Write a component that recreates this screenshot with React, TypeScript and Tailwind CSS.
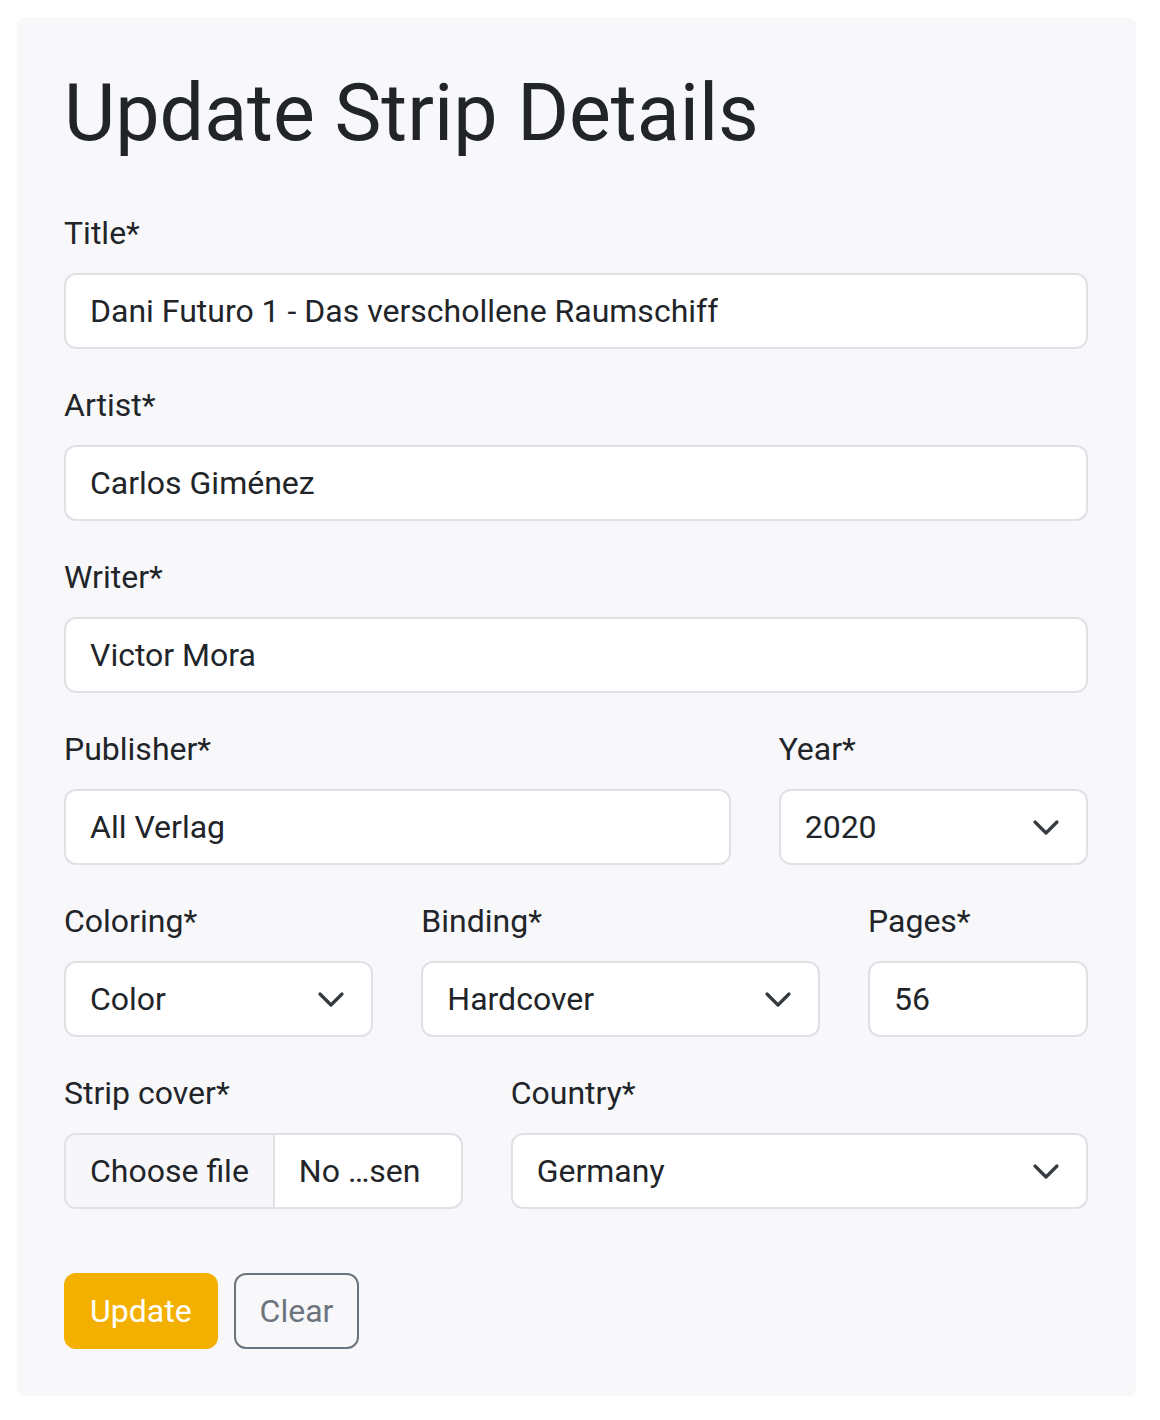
import React from "react";

const font = { fontFamily: "Roboto, 'Liberation Sans', sans-serif" };

function Chevron() {
  return (
    <svg width="32" height="32" viewBox="0 0 16 16" className="shrink-0">
      <path d="m2.5 5.5 5.5 5.5 5.5-5.5" fill="none" stroke="#343a40" strokeWidth="1.6" strokeLinecap="round" strokeLinejoin="round" />
    </svg>
  );
}

function Label({ children }: { children: React.ReactNode }) {
  return <div className="mb-4 text-[32px] leading-[48px] text-[#212529]">{children}</div>;
}

function Input({ value }: { value: string }) {
  return (
    <div className="flex h-[76px] items-center rounded-xl border-2 border-[#dee2e6] bg-white px-6 text-[32px] text-[#212529]">
      <span className="truncate">{value}</span>
    </div>
  );
}

function Select({ value }: { value: string }) {
  return (
    <div className="flex h-[76px] items-center justify-between rounded-xl border-2 border-[#dee2e6] bg-white pl-6 pr-[24px] text-[32px] text-[#212529]">
      <span>{value}</span>
      <Chevron />
    </div>
  );
}

function Field({ label, children, span }: { label: string; children: React.ReactNode; span: string }) {
  return (
    <div className={span}>
      <Label>{label}</Label>
      {children}
    </div>
  );
}

export default function App() {
  return (
    <div className="min-h-[1420px] bg-white pl-[17px] pt-[18px]" style={font}>
      <div className="w-[1119px] rounded-lg bg-[#f8f8fa] pb-[47px] pl-[47px] pr-[48px] pt-[47px] shadow-[0_0_2px_rgba(0,0,0,0.04)]">
        <h1 className="mb-12 text-[79px] font-normal leading-[96px] text-[#212529]">Update Strip Details</h1>

        <div className="mb-8">
          <Label>Title*</Label>
          <Input value="Dani Futuro 1 - Das verschollene Raumschiff" />
        </div>
        <div className="mb-8">
          <Label>Artist*</Label>
          <Input value="Carlos Giménez" />
        </div>
        <div className="mb-8">
          <Label>Writer*</Label>
          <Input value="Victor Mora" />
        </div>

        <div className="mb-8 grid grid-cols-12 gap-x-12">
          <Field label="Publisher*" span="col-span-8">
            <Input value="All Verlag" />
          </Field>
          <Field label="Year*" span="col-span-4">
            <Select value="2020" />
          </Field>
        </div>

        <div className="mb-8 grid grid-cols-12 gap-x-12">
          <Field label="Coloring*" span="col-span-4">
            <Select value="Color" />
          </Field>
          <Field label="Binding*" span="col-span-5">
            <Select value="Hardcover" />
          </Field>
          <Field label="Pages*" span="col-span-3">
            <Input value="56" />
          </Field>
        </div>

        <div className="mb-16 grid grid-cols-12 gap-x-12">
          <Field label="Strip cover*" span="col-span-5">
            <div className="flex h-[76px] items-stretch overflow-hidden rounded-xl border-2 border-[#dee2e6] bg-white text-[32px] text-[#212529]">
              <div className="flex items-center border-r-2 border-[#dee2e6] bg-[#f7f7f9] px-6">Choose file</div>
              <div className="flex items-center px-6">No …sen</div>
            </div>
          </Field>
          <Field label="Country*" span="col-span-7">
            <Select value="Germany" />
          </Field>
        </div>

        <div className="flex gap-4">
          <button className="h-[76px] rounded-xl border-2 border-[#f4b000] bg-[#f4b000] px-6 text-[32px] text-white">
            Update
          </button>
          <button className="h-[76px] rounded-xl border-2 border-[#6c757d] px-6 text-[32px] text-[#6c757d]">
            Clear
          </button>
        </div>
      </div>
    </div>
  );
}
